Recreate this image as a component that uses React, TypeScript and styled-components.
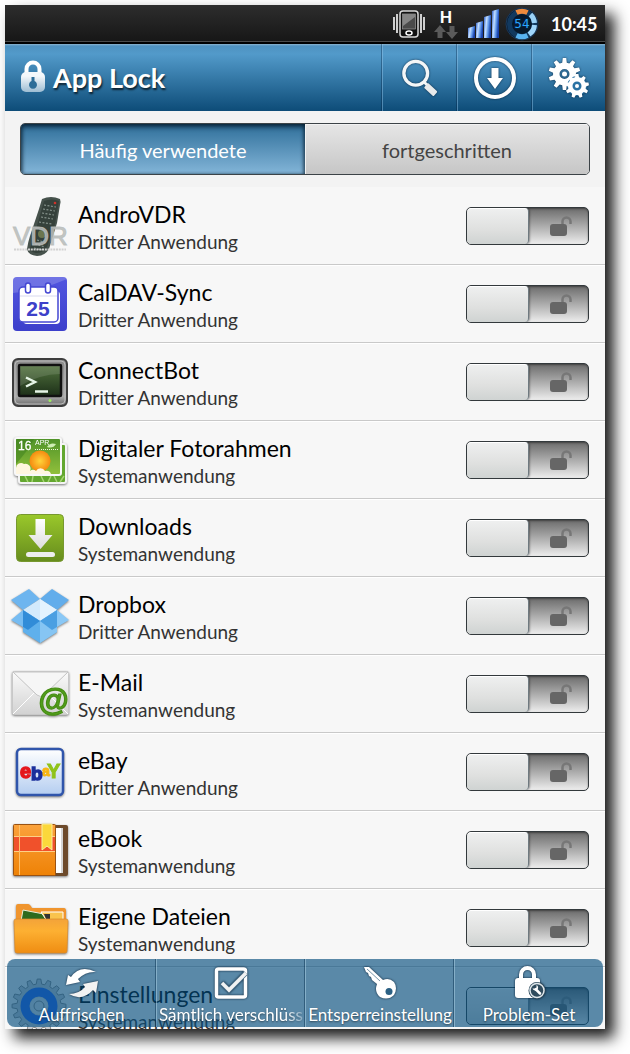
import React from "react";
import styled, { createGlobalStyle, css } from "styled-components";

const GlobalStyle = createGlobalStyle`
  *, *::before, *::after { box-sizing: border-box; }
  body {
    margin: 0;
    background: #fff;
    font-family: Lato, "Noto Sans", sans-serif;
  }
  button { font-family: inherit; cursor: pointer; }
`;

const Page = styled.div`
  height: 100vh;
  padding: 5px 25px 25px 5px;
`;

const Screen = styled.div`
  position: relative;
  display: flex;
  flex-direction: column;
  height: 100%;
  background: #f7f7f7;
  box-shadow: 9px 9px 14px rgba(0, 0, 0, 0.9);
`;

const StatusBar = styled.div`
  flex: none;
  display: flex;
  align-items: center;
  justify-content: flex-end;
  height: 39px;
  padding: 0 8px 2px 0;
  background: linear-gradient(#2d2d2d, #171717 36px, #4a4a4a 36px, #4a4a4a 37px, #000 37px);
  svg { display: block; }
`;

const StatusGap = styled.span<{ $w: number }>`
  width: ${(p) => p.$w}px;
`;

const Network = styled.div`
  display: flex;
  flex-direction: column;
  align-items: center;
  color: #fff;
  font-size: 16px;
  line-height: 16px;
  font-weight: 900;
`;

const Clock = styled.time`
  width: 46px;
  color: #fff;
  font-size: 18px;
  line-height: 24px;
  font-weight: 700;
  white-space: nowrap;
`;

const Header = styled.header`
  flex: none;
  display: flex;
  height: 67px;
  background: linear-gradient(#8cb4cf, #4f92c0 2px, #529aca 10px, #0d4c78);
`;

const Title = styled.h1`
  flex: 1;
  display: flex;
  align-items: center;
  gap: 7px;
  margin: 0;
  padding: 0 0 0 15px;
  color: #fff;
  font-size: 27px;
  line-height: 36px;
  font-weight: 700;
  text-shadow: 1px 2px 2px rgba(0, 0, 0, 0.7);
`;

const HeaderButton = styled.button`
  display: flex;
  align-items: center;
  justify-content: center;
  width: 75px;
  padding: 0;
  border: 0;
  border-left: 1px solid rgba(150, 200, 235, 0.45);
  box-shadow: -1px 0 0 rgba(0, 30, 60, 0.35);
  background: none;
  svg { filter: drop-shadow(0 0 1px rgba(0, 20, 40, 0.7)); }
  &:last-child { width: 73px; }
`;

const TabArea = styled.div`
  flex: none;
  padding: 12px 15px;
  background: #f3f3f3;
`;

const Tabs = styled.div`
  display: flex;
  height: 52px;
  border: 1px solid #3c4347;
  border-radius: 5px;
  overflow: hidden;
`;

const Tab = styled.button<{ $active?: boolean }>`
  flex: 1;
  padding: 2px 0 0;
  border: 0;
  font-size: 20px;
  line-height: 24px;
  ${(p) =>
    p.$active
      ? css`
          color: #fff;
          background: linear-gradient(#2f6f9a, #83b5d8);
          box-shadow: inset 0 3px 5px rgba(0, 20, 35, 0.75), inset 2px 0 3px rgba(0, 20, 35, 0.3),
            inset -2px 0 3px rgba(0, 20, 35, 0.3);
        `
      : css`
          color: #444;
          background: linear-gradient(#e6e6e6, #c6c6c6);
          box-shadow: inset 1px 1px 0 #f2f2f2;
        `}
`;

const List = styled.ul`
  flex: 1;
  min-height: 0;
  margin: 0;
  padding: 0;
  overflow: hidden;
  list-style: none;
`;

const Row = styled.li`
  display: flex;
  align-items: center;
  height: 78px;
  padding: 0 16px 0 5px;
  border-bottom: 1px solid #c9c9c9;
  box-shadow: 0 1px 0 #fff;
`;

const RowText = styled.div`
  flex: 1;
  min-width: 0;
  padding: 4px 0 0 8px;
`;

const AppName = styled.div`
  color: #000;
  font-size: 23px;
  line-height: 28px;
`;

const AppKind = styled.div`
  color: #333;
  font-size: 19px;
  line-height: 28px;
`;

const Switch = styled.label`
  position: relative;
  display: flex;
  width: 123px;
  height: 38px;
  border: 1px solid #33393c;
  border-radius: 5px;
  background: linear-gradient(#6c6c6c, #a5a5a5 45%, #ededed);
  box-shadow: inset 0 1px 2px rgba(0, 0, 0, 0.4);
  overflow: hidden;
  cursor: pointer;
`;

const SwitchInput = styled.input`
  position: absolute;
  inset: 0;
  width: 100%;
  height: 100%;
  margin: 0;
  opacity: 0;
  cursor: pointer;
`;

const Knob = styled.span`
  width: 62px;
  border-right: 1px solid #6f7a80;
  border-radius: 4px;
  background: linear-gradient(#eff0f0, #dfe0df 60%, #cfd3d2);
  box-shadow: inset 0 1px 0 #fff, 1px 0 2px rgba(0, 0, 0, 0.35);
`;

const SwitchIcon = styled.span`
  flex: 1;
  display: flex;
  align-items: center;
  justify-content: center;
  padding-left: 4px;
`;

const BottomBar = styled.nav`
  position: absolute;
  left: 2px;
  right: 2px;
  bottom: 2px;
  display: grid;
  grid-template-columns: repeat(4, minmax(0, 1fr));
  height: 68px;
  border-radius: 8px;
  background: rgba(6, 78, 126, 0.65);
  overflow: hidden;
`;

const BottomButton = styled.button`
  display: flex;
  flex-direction: column;
  align-items: center;
  gap: 3px;
  padding: 7px 0 0;
  border: 0;
  color: #fff;
  background: none;
  font-size: 17px;
  line-height: 24px;
  white-space: nowrap;
  text-shadow: 0 1px 2px rgba(0, 0, 0, 0.5);
  svg { flex: none; filter: drop-shadow(0 0 1px rgba(0, 20, 40, 0.9)); }
  & + & {
    border-left: 1px solid rgba(170, 205, 225, 0.55);
    box-shadow: -1px 0 0 rgba(0, 40, 70, 0.45);
  }
`;

const FadedLabel = styled.span`
  align-self: stretch;
  overflow: hidden;
  text-align: center;
  mask-image: linear-gradient(90deg, #000 86%, rgba(0, 0, 0, 0.2));
`;

function gearPath(cx: number, cy: number, outer: number, inner: number, teeth: number) {
  const step = (Math.PI * 2) / teeth;
  const at = (r: number, a: number) =>
    `${(cx + r * Math.cos(a)).toFixed(2)} ${(cy + r * Math.sin(a)).toFixed(2)}`;
  let d = "";
  for (let i = 0; i < teeth; i++) {
    const a = i * step - Math.PI / 2;
    d += `${i ? "L" : "M"}${at(inner, a - step * 0.32)}L${at(outer, a - step * 0.17)}`;
    d += `L${at(outer, a + step * 0.17)}L${at(inner, a + step * 0.32)}`;
  }
  return d + "Z";
}

const ring = (cx: number, cy: number, r: number) =>
  `M${cx - r} ${cy}a${r} ${r} 0 1 0 ${r * 2} 0a${r} ${r} 0 1 0 ${-r * 2} 0Z`;

const VibrateIcon = () => (
  <svg width="34" height="30" viewBox="0 0 34 30">
    <path d="M2 8v13M5 5v19M29 5v19M32 8v13" stroke="#cfcfcf" strokeWidth="2" />
    <rect x="8" y="2" width="18" height="26" rx="3" fill="#111" stroke="#d8d8d8" strokeWidth="1.5" />
    <rect x="10.5" y="5" width="13" height="15" fill="#4a4a4a" stroke="#999" strokeWidth=".7" />
    <path d="M11 5h12v3L11 17Z" fill="#858585" />
    <ellipse cx="17" cy="24" rx="3" ry="2" fill="none" stroke="#fff" strokeWidth="1.5" />
  </svg>
);

const ArrowsIcon = () => (
  <svg width="24" height="14" viewBox="0 0 24 14">
    <path d="M6 0L12 7H8.5V13H3.5V7H0Z M15.5 1H20.5V7H24L18 14L12 7H15.5Z" fill="#5a5a5a" />
  </svg>
);

const SignalIcon = () => (
  <svg width="32" height="30" viewBox="0 0 32 30">
    <defs>
      <linearGradient id="sig" x1="0" x2="1" y1="0" y2=".3">
        <stop offset="0" stopColor="#2a5cc8" />
        <stop offset=".4" stopColor="#c4dfff" />
        <stop offset=".7" stopColor="#5f97ea" />
        <stop offset="1" stopColor="#163fa8" />
      </linearGradient>
    </defs>
    <path d="M0 19l7-2v12H0Z" fill="url(#sig)" />
    <path d="M8 14l7-2v17H8Z" fill="url(#sig)" />
    <path d="M16 8l7-2v23h-7Z" fill="url(#sig)" />
    <path d="M24 2l7-2v29h-7Z" fill="url(#sig)" />
  </svg>
);

const BatteryIcon = () => (
  <svg width="34" height="34" viewBox="0 0 34 34">
    <circle cx="17" cy="17" r="16" fill="#07182b" stroke="#1c3a5c" />
    <circle cx="17" cy="17" r="12.5" fill="none" stroke="#12395f" strokeWidth="5" />
    <path d="M11.5 5.5A12.5 12.5 0 0 1 22.5 5.5" fill="none" stroke="#ef8a3c" strokeWidth="5" />
    <path d="M25.5 7.5A12.5 12.5 0 0 1 29.5 16" fill="none" stroke="#9ad2f7" strokeWidth="5" />
    <path d="M29.5 18A12.5 12.5 0 0 1 24 27.5" fill="none" stroke="#9fd6fb" strokeWidth="5" />
    <path d="M22.5 28.5A12.5 12.5 0 0 1 11.5 28.5" fill="none" stroke="#58b2f0" strokeWidth="5" />
    <text x="17" y="21" textAnchor="middle" fontFamily="DejaVu Sans, sans-serif" fontSize="12" fill="#2ba6ff" stroke="#06203c" strokeWidth="2" paintOrder="stroke">54</text>
  </svg>
);

const TitleLock = () => (
  <svg width="26" height="36" viewBox="0 0 26 36">
    <defs>
      <linearGradient id="tl" x2="0" y2="1">
        <stop offset=".2" stopColor="#f4f8fb" />
        <stop offset="1" stopColor="#9dbdd3" />
      </linearGradient>
    </defs>
    <path d="M6.5 16V9a6.5 6.5 0 0 1 13 0V16" fill="none" stroke="#fff" strokeWidth="4" />
    <rect x="1" y="12" width="24" height="20" rx="5" fill="url(#tl)" />
    <path d="M11.500 17h3v4a4 4 0 1 1-3 0Z" fill="#2c6d98" />
  </svg>
);

const SearchIcon = () => (
  <svg width="38" height="38" viewBox="0 0 40 40">
    <circle cx="15.5" cy="15" r="12.5" fill="none" stroke="#f4f6f7" strokeWidth="3.5" />
    <path d="M24 24l4 4" stroke="#f4f6f7" strokeWidth="3" />
    <path d="M28.500 26.500L37 34.500L34 38L25.500 30Z" fill="#e8eaeb" stroke="#e8eaeb" strokeWidth="2" strokeLinejoin="round" />
  </svg>
);

const DownloadIcon = () => (
  <svg width="44" height="44" viewBox="0 0 44 44">
    <circle cx="22" cy="22" r="19" fill="none" stroke="#fff" strokeWidth="4" />
    <path d="M18.5 12H25.5V22H30L22 33L14 22H18.5Z" fill="#fff" />
  </svg>
);

const GearsIcon = () => (
  <svg width="42" height="42" viewBox="0 0 42 42">
    <path fillRule="evenodd" fill="#fff" d={gearPath(16.5, 17, 16, 11.5, 10) + ring(16.5, 17, 5)} />
    <circle cx="29" cy="29" r="10" fill="#2a72a3" />
    <path fillRule="evenodd" fill="#fff" d={gearPath(29, 29, 12, 9, 9) + ring(29, 29, 4.5)} />
    <circle cx="16.5" cy="17" r="2.5" fill="#fff" />
    <circle cx="29" cy="29" r="2" fill="#fff" />
  </svg>
);

const UnlockedIcon = () => (
  <svg width="24" height="22" viewBox="0 0 24 22">
    <path d="M13.5 9V6.5a4 4 0 0 1 8 0V9" fill="none" stroke="#777" strokeWidth="2.5" />
    <rect x="1" y="9" width="17" height="12" rx="3" fill="#666" />
  </svg>
);

const AppSvg = styled.svg.attrs({ width: 60, height: 60, viewBox: "0 0 60 60" })`
  flex: none;
  display: block;
  overflow: visible;
`;

const ShadowSvg = styled(AppSvg)`
  filter: drop-shadow(0 1px 1px rgba(0, 0, 0, 0.5));
`;

const VdrIcon = () => (
  <AppSvg>
    <path d="M32 3Q41-1 50 3Q51 5 50 9L47 27L39 53Q35 60 27 60Q18 59 17 53Q18 46 20 40L29 13Z" fill="#46524c" />
    <path d="M34 5Q42 2 49 5L45 28L37 51Q33 57 26 57Q20 56 20 52L24 40Z" fill="#35413b" />
    <path d="M34 9l12 2M33 13l12 2M32 17l12 2M31 21l12 2M29 26l13 2M27 44l10 3M25 48l10 3M24 52l8 2" stroke="#85928b" strokeWidth="1.2" strokeDasharray="2 1.5" />
    <circle cx="45" cy="7" r="1.3" fill="#d0332b" />
    <circle cx="32" cy="38" r="4" fill="#6b7650" />
    <text x="3" y="49" fontFamily="Liberation Sans, sans-serif" fontSize="26" fill="#b9bdbb" fillOpacity=".85" stroke="#b9bdbb" strokeOpacity=".85">VDR</text>
    <path d="M4 53.5H56" stroke="#d2d2d2" strokeWidth="2" strokeDasharray="2 .8" />
  </AppSvg>
);

const CalendarIcon = () => (
  <AppSvg>
    <defs>
      <linearGradient id="cal" x2="0" y2="1">
        <stop offset="0" stopColor="#5256e0" />
        <stop offset="1" stopColor="#3c3fcb" />
      </linearGradient>
    </defs>
    <rect x="3" y="3" width="54" height="54" rx="4" fill="url(#cal)" />
    <path d="M3 19Q30 17 57 5V7a4 4 0 0 0-4-4H7a4 4 0 0 0-4 4Z" fill="#fff" opacity=".18" />
    <rect x="13" y="17" width="37" height="33" rx="4" fill="#fff" />
    <rect x="9" y="13" width="39" height="35" rx="4" fill="#fff" stroke="#4447d2" strokeWidth="1.5" />
    <path d="M10 22H47" stroke="#d8d9ee" />
    <rect x="15.5" y="9" width="5" height="10" rx="2.5" fill="#fff" stroke="#4447d2" strokeWidth="1.5" />
    <rect x="35.5" y="9" width="5" height="10" rx="2.5" fill="#fff" stroke="#4447d2" strokeWidth="1.5" />
    <text x="28" y="42" textAnchor="middle" fontFamily="Liberation Sans, sans-serif" fontWeight="700" fontSize="21" fill="#3d41c9">25</text>
  </AppSvg>
);

const TerminalIcon = () => (
  <AppSvg>
    <defs>
      <linearGradient id="tb" x2="0" y2="1">
        <stop offset="0" stopColor="#8a8a8a" />
        <stop offset=".8" stopColor="#a9a9a9" />
        <stop offset="1" stopColor="#666" />
      </linearGradient>
      <linearGradient id="ts" x2="0" y2="1">
        <stop offset="0" stopColor="#53743f" />
        <stop offset="1" stopColor="#1c2f18" />
      </linearGradient>
    </defs>
    <rect x="3" y="7" width="54" height="47" rx="5" fill="url(#tb)" stroke="#3e3e3e" strokeWidth="2" />
    <rect x="5" y="9" width="50" height="43" rx="4" fill="none" stroke="#bbb" strokeWidth="1" />
    <rect x="9" y="13" width="42" height="31" rx="1" fill="url(#ts)" stroke="#111" strokeWidth="2.5" />
    <path d="M10 14H50V22Q30 22 10 34Z" fill="#fff" opacity=".12" />
    <path d="M16 25.5L25 30L16 34.5M25 39.5H38" fill="none" stroke="#e6f5e6" strokeWidth="2.5" />
    <circle cx="40" cy="48.5" r="1.5" fill="#9bea5e" />
    <path d="M44 48.5h5" stroke="#888" />
  </AppSvg>
);

const PhotoFrameIcon = () => (
  <ShadowSvg>
    <defs>
      <linearGradient id="pf" x2="0" y2="1">
        <stop offset="0" stopColor="#4e9228" />
        <stop offset="1" stopColor="#93c13c" />
      </linearGradient>
      <radialGradient id="sun">
        <stop offset="0" stopColor="#ffd43a" />
        <stop offset="1" stopColor="#f58a10" />
      </radialGradient>
    </defs>
    <rect x="9" y="14" width="47" height="39" rx="2" fill="#63a72f" stroke="#f4f4f4" strokeWidth="2" />
    <path d="M18 52l-3-6M22 52l1-6M34 52l-3-6M38 52l3-6M47 52l-3-6M50 52l4-6" stroke="#a5d471" strokeWidth="1.5" />
    <rect x="5" y="8" width="46" height="37" rx="2" fill="url(#pf)" stroke="#f8f8f8" strokeWidth="2" />
    <path d="M6 34Q20 18 24 9H6Z" fill="#3b7d1c" opacity=".5" />
    <circle cx="30" cy="31" r="10.5" fill="url(#sun)" />
    <path d="M6 44V38a5 5 0 0 1 8-4a5 5 0 0 1 6 7a4 4 0 0 1 6 0a5 5 0 0 1 9 0a5 5 0 0 1 6 3Z" fill="#fff6e0" />
    <text x="8" y="20" fontFamily="Liberation Sans, sans-serif" fontSize="12" fill="#fff" stroke="#fff" strokeWidth=".3">16</text>
    <text x="25" y="15" fontFamily="Liberation Sans, sans-serif" fontSize="7" fill="#fff">APR</text>
    <path d="M25 19.5H48" stroke="#eef8dd" strokeDasharray="1 1" />
    <path d="M37 17q3-5 9-3q-3 5-9 3Z" fill="#cfeeb4" />
  </ShadowSvg>
);

const DownloadsAppIcon = () => (
  <AppSvg>
    <defs>
      <linearGradient id="dl" x2="0" y2="1">
        <stop offset="0" stopColor="#9ac82b" />
        <stop offset="1" stopColor="#668c1d" />
      </linearGradient>
      <linearGradient id="dla" x2="0" y2="1">
        <stop offset="0" stopColor="#fff" />
        <stop offset="1" stopColor="#ddd" />
      </linearGradient>
    </defs>
    <rect x="6.5" y="6.5" width="47" height="47" rx="4" fill="url(#dl)" stroke="#77982f" />
    <path d="M25.5 11H35V27H42.5L30.5 41L18.5 27H25.5Z" fill="url(#dla)" />
    <rect x="16" y="44" width="29" height="5" rx="2.5" fill="#eee" />
  </AppSvg>
);

const DropboxIcon = () => (
  <ShadowSvg>
    <path d="M13 24V46L30 57L47 46V24Z" fill="#5fb0ec" />
    <path d="M30 35V57L47 46V30Z" fill="#86c5f3" />
    <path d="M1 14L19 3L30 13L13 24Z" fill="#6db5ef" />
    <path d="M59 14L42 3L30 13L47 24Z" fill="#62adeb" />
    <path d="M13 24L30 13L47 24L30 35Z" fill="#d3eafc" />
    <path d="M30 13L47 24L30 35Z" fill="#e4f3fe" />
    <path d="M1 34L13 24L30 35L18 44Z" fill="#76bcf2" />
    <path d="M59 34L47 24L30 35L42 44Z" fill="#8ac8f6" />
    <path d="M13 24L30 35L18 44L13 41Z" fill="#318cd8" />
    <path d="M47 24L30 35L42 44L47 41Z" fill="#4a9fe2" />
  </ShadowSvg>
);

const MailIcon = () => (
  <ShadowSvg>
    <defs>
      <linearGradient id="ml" x2="0" y2="1">
        <stop offset="0" stopColor="#fbfbfb" />
        <stop offset="1" stopColor="#d2d2d2" />
      </linearGradient>
    </defs>
    <rect x="2.5" y="7.5" width="56" height="43" rx="2" fill="url(#ml)" stroke="#c8c8c8" />
    <path d="M3 50L24 29M58 50L37 29" stroke="#fff" fill="none" />
    <path d="M3 8L27 31Q30.5 34 34 31L58 8Z" fill="#f6f6f6" stroke="#c4c4c4" />
    <text x="43" y="47" textAnchor="middle" fontFamily="Liberation Sans, sans-serif" fontWeight="700" fontStyle="italic" fontSize="31" fill="#53a01c" stroke="#468c14" strokeWidth="1.2">@</text>
  </ShadowSvg>
);

const EbayIcon = () => (
  <ShadowSvg>
    <defs>
      <linearGradient id="eb" x2="0" y2="1">
        <stop offset="0" stopColor="#fff" />
        <stop offset="1" stopColor="#b4cdf0" />
      </linearGradient>
    </defs>
    <rect x="7" y="7" width="46" height="46" rx="4" fill="url(#eb)" stroke="#3055ab" strokeWidth="2.5" />
    <g fontFamily="Liberation Sans, sans-serif" fontWeight="700">
      <text x="10" y="36" fontSize="20" fill="#e5161d" stroke="#e5161d" strokeWidth="1.5">e</text>
      <text x="32" y="34" fontSize="14" fill="#f7b512" stroke="#f7b512">a</text>
      <text x="21" y="38" fontSize="19" fill="#1b2f9c" stroke="#1b2f9c" strokeWidth="1.5">b</text>
      <text x="37" y="36" fontSize="20" fill="#8fc31b" stroke="#8fc31b">Y</text>
    </g>
  </ShadowSvg>
);

const BookIcon = () => (
  <ShadowSvg>
    <defs>
      <linearGradient id="bk" x2="0" y2="1">
        <stop offset="0" stopColor="#fba23c" />
        <stop offset="1" stopColor="#ee8206" />
      </linearGradient>
    </defs>
    <rect x="4" y="5" width="54" height="51" rx="2" fill="#6d4a2b" />
    <rect x="44" y="8" width="9" height="45" fill="#fff" />
    <path d="M52 8v45" stroke="#aaa" />
    <rect x="3.5" y="4.5" width="42" height="51" rx="1" fill="url(#bk)" stroke="#9a5212" />
    <rect x="4" y="16" width="41" height="15" fill="#f0512b" />
    <path d="M4 16.5H45M4 31.5H45" stroke="#fdd087" />
    <path d="M9.5 5V55" stroke="#fcc06b" />
    <path d="M32 4H42V30L37 26L32 30Z" fill="#fbd83b" stroke="#f9eba0" />
  </ShadowSvg>
);

const FolderIcon = () => (
  <ShadowSvg>
    <defs>
      <linearGradient id="fo" x2="0" y2="1">
        <stop offset="0" stopColor="#f3a33a" />
        <stop offset=".35" stopColor="#fdb032" />
        <stop offset="1" stopColor="#ef8d12" />
      </linearGradient>
    </defs>
    <path d="M6 24V8Q6 6 8 6H18Q20 6 22 10H54Q56 10 56 13V24Z" fill="#f0952e" />
    <path d="M13 12l26 5v6H11Z" fill="#2e6b1e" stroke="#e8f0dc" />
    <path d="M31 14H53v9H37Z" fill="#f9c34d" stroke="#fff" />
    <path d="M34 16h6v5h-4Z" fill="#333" />
    <path d="M4 23Q4 21 6 21H56Q58 21 58 23L57 53Q57 55 55 55H7Q5 55 5 53Z" fill="url(#fo)" stroke="#d98a2c" strokeWidth=".7" />
  </ShadowSvg>
);

const SettingsAppIcon = () => (
  <AppSvg>
    <path fillRule="evenodd" d={gearPath(29, 30, 27, 22, 16) + ring(29, 30, 8)} fill="#c9ccd0" stroke="#888" />
    <circle cx="29" cy="30" r="14" fill="none" stroke="#2868f5" strokeWidth="9" />
    <circle cx="29" cy="30" r="9" fill="#dfe3e8" />
    <circle cx="29" cy="30" r="5" fill="none" stroke="#888" />
  </AppSvg>
);

const RefreshIcon = () => (
  <svg width="34" height="34" viewBox="0 0 34 34">
    <path d="M1 19L3 9L6 11Q15-2 31 6Q21 5 13 13L15 16Z" fill="#fff" />
    <path d="M33 15L31 27L28 24Q17 36 4 28Q14 28 20 21L18 18Z" fill="#f2f2f2" />
  </svg>
);

const CheckIcon = () => (
  <svg width="34" height="34" viewBox="0 0 34 34">
    <rect x="2.5" y="3" width="29" height="28" rx="2" fill="none" stroke="#fff" strokeWidth="3.5" />
    <path d="M8 17L15 24L32 7" fill="none" stroke="#4a6f88" strokeWidth="5" />
    <path d="M8 17L15 24L32 7" fill="none" stroke="#f2f2f2" strokeWidth="3.5" />
  </svg>
);

const KeyIcon = () => (
  <svg width="34" height="34" viewBox="0 0 34 34">
    <path d="M1 1L6 1L20 14Q26 11 31 16Q35 22 31 29Q25 35 17 31Q11 26 14 18L9 14L8 11L6 10L5 7L3 6Z" fill="#fff" />
    <path d="M4 3L17 15" stroke="#7795a8" strokeWidth="1" />
    <circle cx="26" cy="25.5" r="3.5" fill="#2b6083" />
  </svg>
);

const LockToolIcon = () => (
  <svg width="34" height="34" viewBox="0 0 34 34">
    <path d="M9 15V8.5a6.5 6.5 0 0 1 13 0V15" fill="none" stroke="#fff" strokeWidth="4" />
    <rect x="3" y="12" width="25" height="20" rx="3" fill="#fff" />
    <circle cx="25" cy="24.5" r="8.5" fill="#2f4b5d" />
    <circle cx="25" cy="24.5" r="7" fill="none" stroke="#dfe6ea" strokeWidth="1.5" />
    <path d="M24 23.500L28 27.500" stroke="#fff" strokeWidth="2.5" strokeLinecap="round" />
    <path d="M20.500 22.500a3 3 0 0 0 5 1a3 3 0 0 0-1-4.500v2.500l-2 1Z" fill="#fff" />
  </svg>
);

const THIRD_PARTY = "Dritter Anwendung";
const SYSTEM = "Systemanwendung";

const apps = [
  { name: "AndroVDR", kind: THIRD_PARTY, Icon: VdrIcon },
  { name: "CalDAV-Sync", kind: THIRD_PARTY, Icon: CalendarIcon },
  { name: "ConnectBot", kind: THIRD_PARTY, Icon: TerminalIcon },
  { name: "Digitaler Fotorahmen", kind: SYSTEM, Icon: PhotoFrameIcon },
  { name: "Downloads", kind: SYSTEM, Icon: DownloadsAppIcon },
  { name: "Dropbox", kind: THIRD_PARTY, Icon: DropboxIcon },
  { name: "E-Mail", kind: SYSTEM, Icon: MailIcon },
  { name: "eBay", kind: THIRD_PARTY, Icon: EbayIcon },
  { name: "eBook", kind: SYSTEM, Icon: BookIcon },
  { name: "Eigene Dateien", kind: SYSTEM, Icon: FolderIcon },
  { name: "Einstellungen", kind: SYSTEM, Icon: SettingsAppIcon },
];

export default function App() {
  return (
    <>
      <GlobalStyle />
      <Page>
        <Screen>
          <StatusBar>
            <VibrateIcon />
            <StatusGap $w={8} />
            <Network>
              H
              <ArrowsIcon />
            </Network>
            <StatusGap $w={10} />
            <SignalIcon />
            <StatusGap $w={5} />
            <BatteryIcon />
            <StatusGap $w={12} />
            <Clock>10:45</Clock>
          </StatusBar>
          <Header>
            <Title>
              <TitleLock />
              App Lock
            </Title>
            <HeaderButton aria-label="Suchen"><SearchIcon /></HeaderButton>
            <HeaderButton aria-label="Herunterladen"><DownloadIcon /></HeaderButton>
            <HeaderButton aria-label="Optionen"><GearsIcon /></HeaderButton>
          </Header>
          <TabArea>
            <Tabs role="tablist">
              <Tab role="tab" aria-selected="true" $active>Häufig verwendete</Tab>
              <Tab role="tab" aria-selected="false">fortgeschritten</Tab>
            </Tabs>
          </TabArea>
          <List>
            {apps.map(({ name, kind, Icon }) => (
              <Row key={name}>
                <Icon />
                <RowText>
                  <AppName>{name}</AppName>
                  <AppKind>{kind}</AppKind>
                </RowText>
                <Switch>
                  <SwitchInput type="checkbox" aria-label={name} />
                  <Knob />
                  <SwitchIcon><UnlockedIcon /></SwitchIcon>
                </Switch>
              </Row>
            ))}
          </List>
          <BottomBar>
            <BottomButton>
              <RefreshIcon />
              <span>Auffrischen</span>
            </BottomButton>
            <BottomButton>
              <CheckIcon />
              <FadedLabel>Sämtlich verschlüss</FadedLabel>
            </BottomButton>
            <BottomButton>
              <KeyIcon />
              <span>Entsperreinstellung</span>
            </BottomButton>
            <BottomButton>
              <LockToolIcon />
              <span>Problem-Set</span>
            </BottomButton>
          </BottomBar>
        </Screen>
      </Page>
    </>
  );
}
